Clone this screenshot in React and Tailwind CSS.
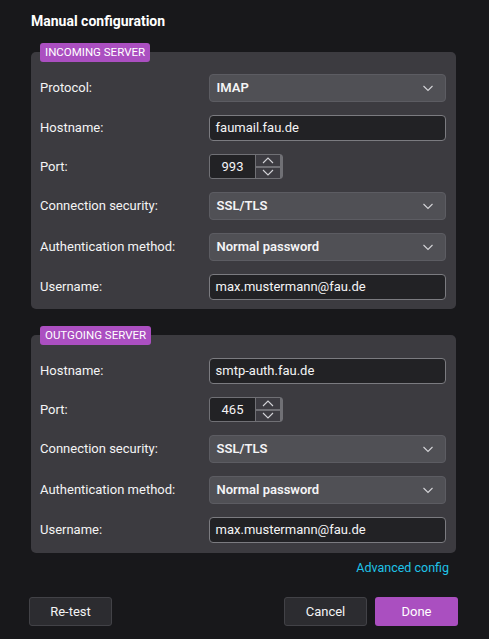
import React from "react";

const font = { fontFamily: 'Roboto, "Liberation Sans", sans-serif' };

function Chevron() {
  return (
    <svg width="12" height="8" viewBox="0 0 12 8" className="text-[#d4d4d8]">
      <path d="M1.5 2 L6 6.5 L10.5 2" fill="none" stroke="currentColor" strokeWidth="1.1" />
    </svg>
  );
}

function Select({ value }) {
  return (
    <div className="flex h-[28px] w-[238px] items-center justify-between rounded-[4px] border border-[#5c5c62] bg-[#505055] pl-[7px] pr-[11px]">
      <span className="text-[13px] font-semibold text-[#f4f4f5]">{value}</span>
      <Chevron />
    </div>
  );
}

function Input({ value }) {
  return (
    <div className="flex h-[26px] w-[238px] items-center rounded-[4px] border border-[#7b7b80] bg-[#222225] px-[6px]">
      <span className="text-[13px] text-[#f4f4f5]">{value}</span>
    </div>
  );
}

function Spin({ value }) {
  return (
    <div className="flex h-[25px] w-[74px] rounded-[3px] border border-[#707075] bg-[#222225]">
      <div className="flex w-[45px] items-center justify-center text-[13px] text-[#f4f4f5]">{value}</div>
      <div className="flex flex-1 flex-col border-l border-r-[2px] border-[#707075] bg-[#3d3c42]">
        <div className="flex flex-1 items-center justify-center border-b-[2px] border-[#707075]">
          <svg width="12" height="7" viewBox="0 0 12 7">
            <path d="M1 6 L6 1 L11 6" fill="none" stroke="#d4d4d8" strokeWidth="1.1" />
          </svg>
        </div>
        <div className="flex flex-1 items-center justify-center">
          <svg width="12" height="7" viewBox="0 0 12 7">
            <path d="M1 1 L6 6 L11 1" fill="none" stroke="#d4d4d8" strokeWidth="1.1" />
          </svg>
        </div>
      </div>
    </div>
  );
}

function Row({ label, children }) {
  return (
    <div className="flex items-center">
      <div className="w-[169px] text-[13px] text-[#f4f4f5]">{label}</div>
      {children}
    </div>
  );
}

function Section({ title, children, top, bottom }) {
  return (
    <div className="flex flex-col">
      <div className="relative z-10 ml-[9px] mt-[1px] self-start rounded-[3px] bg-[#ab4fc1] px-[5px] text-[11.5px] leading-[19px] text-white">
        {title}
      </div>
      <div
        className={`-mt-[10px] flex w-[425px] flex-col gap-[13px] rounded-[5px] bg-[#3c3b40] pl-[9px] pr-[10px] ${top} ${bottom}`}
      >
        {children}
      </div>
    </div>
  );
}

export default function App() {
  return (
    <div className="h-[639px] w-[489px] bg-[#18181b] pl-[31px]" style={font}>
      <div className="pt-[11px] text-[14px] font-bold leading-[20px] text-white">Manual configuration</div>
      <div className="mt-[11px]">
        <Section title="INCOMING SERVER" top="pt-[22px]" bottom="pb-[9px]">
          <Row label="Protocol:"><Select value="IMAP" /></Row>
          <Row label="Hostname:"><Input value="faumail.fau.de" /></Row>
          <Row label="Port:"><Spin value="993" /></Row>
          <Row label="Connection security:"><Select value="SSL/TLS" /></Row>
          <Row label="Authentication method:"><Select value="Normal password" /></Row>
          <Row label="Username:"><Input value="max.mustermann@fau.de" /></Row>
        </Section>
      </div>
      <div className="mt-[16px]">
        <Section title="OUTGOING SERVER" top="pt-[23px]" bottom="pb-[10px]">
          <Row label="Hostname:"><Input value="smtp-auth.fau.de" /></Row>
          <Row label="Port:"><Spin value="465" /></Row>
          <Row label="Connection security:"><Select value="SSL/TLS" /></Row>
          <Row label="Authentication method:"><Select value="Normal password" /></Row>
          <Row label="Username:"><Input value="max.mustermann@fau.de" /></Row>
        </Section>
      </div>
      <div className="mt-[6px] flex w-[418px] justify-end">
        <span className="text-[12.5px] leading-[18px] text-[#1fc3e8]">Advanced config</span>
      </div>
      <div className="mt-[20px] -ml-[2px] flex w-[429px] items-center">
        <button className="h-[29px] w-[83px] rounded-[3px] border border-[#424247] bg-[#2c2c30] text-[13px] text-[#f4f4f5]">Re-test</button>
        <div className="flex-1" />
        <button className="h-[29px] w-[83px] rounded-[3px] border border-[#424247] bg-[#2c2c30] text-[13px] text-[#f4f4f5]">Cancel</button>
        <button className="ml-[8px] h-[29px] w-[83px] rounded-[3px] bg-[#aa4fc0] text-[13px] text-white">Done</button>
      </div>
    </div>
  );
}
